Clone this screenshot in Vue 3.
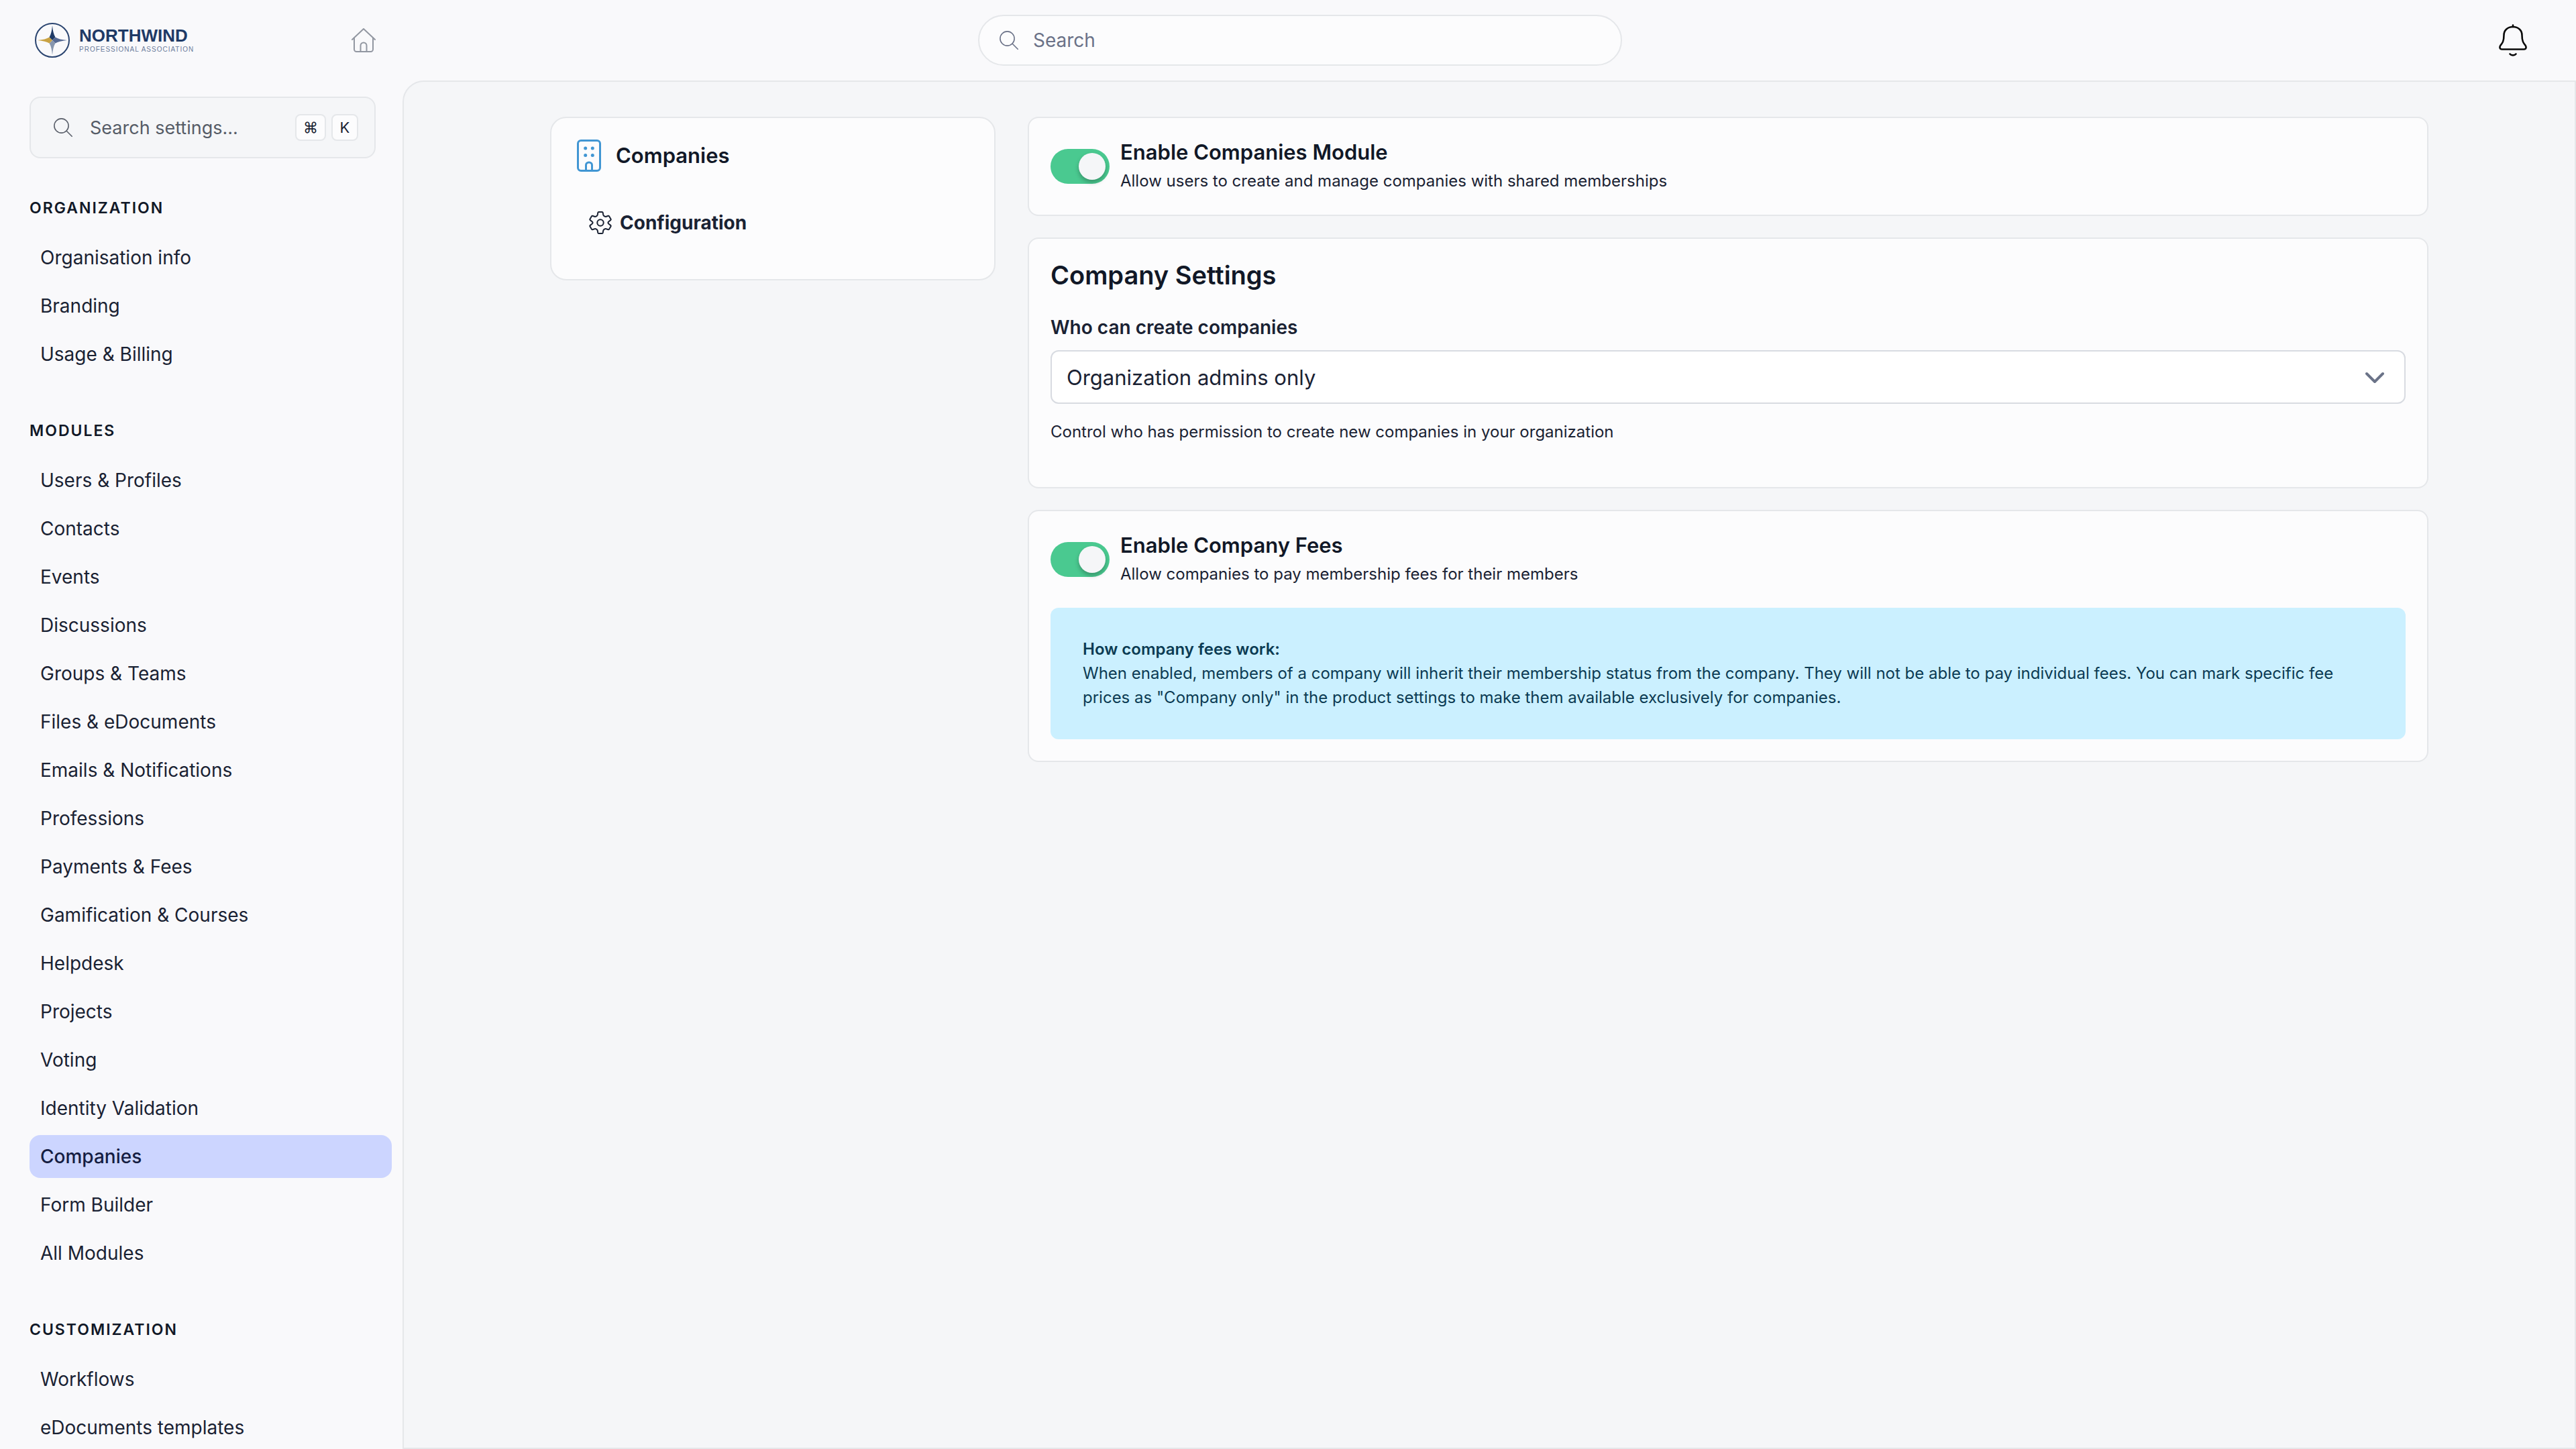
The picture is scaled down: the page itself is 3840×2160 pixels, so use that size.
<script setup>
import { ref } from 'vue'

const sections = [
  { title: 'Organization', items: ['Organisation info', 'Branding', 'Usage & Billing'] },
  {
    title: 'Modules',
    items: [
      'Users & Profiles', 'Contacts', 'Events', 'Discussions', 'Groups & Teams',
      'Files & eDocuments', 'Emails & Notifications', 'Professions', 'Payments & Fees',
      'Gamification & Courses', 'Helpdesk', 'Projects', 'Voting', 'Identity Validation',
      'Companies', 'Form Builder', 'All Modules',
    ],
  },
  { title: 'Customization', items: ['Workflows', 'eDocuments templates'] },
]
const active = ref('Companies')
const moduleEnabled = ref(true)
const feesEnabled = ref(true)
const creator = ref('admins')
</script>

<template>
  <div class="page">
    <header class="topbar">
      <div class="brand-area">
        <a class="brand" href="#" aria-label="Northwind Professional Association">
          <svg class="brand-mark" viewBox="0 0 52 52" aria-hidden="true">
            <circle cx="26" cy="26" r="25" fill="none" stroke="#2b4570" stroke-width="2" />
            <path d="M26 4Q25 16 21.500 21.500L26 26 30.500 21.500Q27 16 26 4Z" fill="#1f3a66" />
            <path d="M48 26Q36 25 30.500 21.500L26 26 30.500 30.500Q36 27 48 26Z" fill="#566a94" />
            <path d="M26 48Q27 36 30.500 30.500L26 26 21.500 30.500Q25 36 26 48Z" fill="#8796ae" />
            <path d="M4 26Q16 27 21.500 30.500L26 26 21.500 21.500Q16 25 4 26Z" fill="#c9a243" />
          </svg>
          <span class="brand-text">
            <span class="brand-name">NORTHWIND</span>
            <span class="brand-tag">PROFESSIONAL ASSOCIATION</span>
          </span>
        </a>
        <a class="home" href="#" aria-label="Home">
          <svg viewBox="0 0 36 36" fill="none" stroke="#9297a1" stroke-width="2" stroke-linecap="round" stroke-linejoin="round" aria-hidden="true">
            <path d="M1 17 18 1 35 17" />
            <path d="M4 14.500V31.500a3.500 3.500 0 0 0 3.500 3.500h21a3.500 3.500 0 0 0 3.500-3.500V14.500" />
            <path d="M13.500 35V26a4.500 4.500 0 0 1 9 0V35" />
          </svg>
        </a>
      </div>
      <label class="search">
        <svg viewBox="0 0 28 28" fill="none" stroke="#6b7288" stroke-width="1.600" stroke-linecap="round" aria-hidden="true">
          <circle cx="11.500" cy="11.500" r="10.600" />
          <path d="M19.200 19.200 27.200 27.200" />
        </svg>
        <input type="search" placeholder="Search" aria-label="Search" />
      </label>
      <div class="actions">
        <button class="bell" type="button" aria-label="Notifications">
          <svg viewBox="0 0 42 48" fill="none" stroke="#0a0a0a" stroke-width="2.600" stroke-linecap="round" stroke-linejoin="round" aria-hidden="true">
            <path d="M21 1.500V4" />
            <path d="M21 4C13 4 7.500 9 7.500 16.500 7.500 26 5 28.500 2.500 31.500 0.500 34.500 1.500 37.500 4.500 37.500H37.500C40.500 37.500 41.500 34.500 39.500 31.500 37 28.500 34.500 26 34.500 16.500 34.500 9 29 4 21 4Z" />
            <path d="M16.500 44.500C18.500 47 23.500 47 25.500 44.500" />
          </svg>
        </button>
      </div>
    </header>

    <div class="body">
      <aside class="sidebar">
        <button class="quick" type="button">
          <svg viewBox="0 0 28 28" fill="none" stroke="#5b606b" stroke-width="1.600" stroke-linecap="round" aria-hidden="true">
            <circle cx="11.500" cy="11.500" r="10.600" />
            <path d="M19.200 19.200 27.200 27.200" />
          </svg>
          <span class="quick-text">Search settings...</span>
          <kbd>⌘</kbd><kbd>K</kbd>
        </button>
        <nav class="nav" aria-label="Settings">
          <section v-for="s in sections" :key="s.title" class="nav-section">
            <h2 class="nav-title">{{ s.title }}</h2>
            <ul class="nav-list">
              <li v-for="item in s.items" :key="item">
                <a href="#" class="nav-link" :class="{ active: item === active }" @click.prevent="active = item">{{ item }}</a>
              </li>
            </ul>
          </section>
        </nav>
      </aside>

      <main class="main">
        <div class="content">
          <div class="card menu">
            <h1 class="menu-title">
              <svg viewBox="0 0 36 48" fill="none" stroke="#4196d3" stroke-width="3" stroke-linejoin="round" aria-hidden="true">
                <rect x="1.500" y="1.500" width="33" height="45" rx="4.500" />
                <path d="M13.500 46V38a4.500 4 0 0 1 9 0V46" />
                <g fill="#4196d3" stroke="none">
                  <circle cx="12.700" cy="13" r="2.500" /><circle cx="23.300" cy="13" r="2.500" />
                  <circle cx="12.700" cy="23.500" r="2.500" /><circle cx="23.300" cy="23.500" r="2.500" />
                </g>
              </svg>
              Companies
            </h1>
            <a class="menu-link" href="#">
              <svg viewBox="0 0 34 34" fill="none" stroke="#1a2233" stroke-width="2" stroke-linejoin="round" aria-hidden="true">
                <circle cx="17" cy="17" r="4.700" />
                <path d="M14.500 1H19.500Q20.500 1 20.700 2L21.200 5Q21.500 6.500 23 7.400T25.800 7.800L28.600 6.800Q29.500 6.500 30 7.300L32.500 11.500Q33 12.400 32.200 13.100L29.500 15.300Q28.400 16.300 28.400 17T29.500 18.700L32.200 20.900Q33 21.600 32.500 22.500L30 26.700Q29.500 27.500 28.600 27.200L25.800 26.200Q24.500 25.700 23 26.600T21.200 29L20.700 32Q20.500 33 19.500 33H14.500Q13.500 33 13.300 32L12.800 29Q12.500 27.500 11 26.600T8.200 26.200L5.400 27.200Q4.500 27.500 4 26.700L1.500 22.500Q1 21.600 1.800 20.900L4.500 18.700Q5.600 17.700 5.600 17T4.500 15.300L1.800 13.100Q1 12.400 1.500 11.500L4 7.300Q4.500 6.500 5.400 6.800L8.200 7.800Q9.500 8.300 11 7.400T12.800 5L13.300 2Q13.500 1 14.500 1Z" />
              </svg>
              Configuration
            </a>
          </div>

          <div class="panels">
            <section class="card panel">
              <div class="switch-row">
                <input id="module" v-model="moduleEnabled" class="switch" type="checkbox" role="switch" />
                <div class="switch-text">
                  <label class="switch-title" for="module">Enable Companies Module</label>
                  <p class="hint">Allow users to create and manage companies with shared memberships</p>
                </div>
              </div>
            </section>

            <section class="card panel">
              <h2 class="panel-title">Company Settings</h2>
              <label class="field-label" for="creator">Who can create companies</label>
              <div class="select-wrap">
                <select id="creator" v-model="creator" class="select">
                  <option value="admins">Organization admins only</option>
                  <option value="all">All members</option>
                </select>
                <svg class="chevron" viewBox="0 0 28 18" fill="none" stroke="#6b7388" stroke-width="4" stroke-linecap="round" stroke-linejoin="round" aria-hidden="true">
                  <path d="M2 3 14 15 26 3" />
                </svg>
              </div>
              <p class="hint field-hint">Control who has permission to create new companies in your organization</p>
            </section>

            <section class="card panel">
              <div class="switch-row">
                <input id="fees" v-model="feesEnabled" class="switch" type="checkbox" role="switch" />
                <div class="switch-text">
                  <label class="switch-title" for="fees">Enable Company Fees</label>
                  <p class="hint">Allow companies to pay membership fees for their members</p>
                </div>
              </div>
              <div class="notice">
                <strong>How company fees work:</strong>
                <p>When enabled, members of a company will inherit their membership status from the company. They will not be able to pay individual fees. You can mark specific fee prices as "Company only" in the product settings to make them available exclusively for companies.</p>
              </div>
            </section>
          </div>
        </div>
      </main>
    </div>
  </div>
</template>

<style>
body {
  margin: 0;
  background: #f9f9fb;
}
</style>

<style scoped>
* {
  box-sizing: border-box;
}
.page {
  min-height: 100vh;
  display: flex;
  flex-direction: column;
  background: #f9f9fb;
  color: #1a2233;
  font-family: Inter, "Liberation Sans", sans-serif;
  font-size: 28px;
}
h1, h2, p, ul {
  margin: 0;
  padding: 0;
}
svg {
  display: block;
  flex: none;
}
a {
  color: inherit;
  text-decoration: none;
}
button, input, select {
  font: inherit;
  color: inherit;
}

/* Top bar */
.topbar {
  display: grid;
  grid-template-columns: 1fr minmax(0, 960px) 1fr;
  align-items: center;
  height: 120px;
  padding-left: 36px;
}
.brand-area {
  display: flex;
  align-items: center;
  justify-content: space-between;
  width: 524px;
  padding-left: 16px;
}
.brand {
  display: flex;
  align-items: center;
  gap: 14px;
}
.brand-mark {
  width: 52px;
  height: 52px;
}
.brand-text {
  display: flex;
  flex-direction: column;
  font-family: "Liberation Sans", Arial, sans-serif;
}
.brand-name {
  font-size: 26px;
  line-height: 28px;
  font-weight: 700;
  color: #1f3a66;
}
.brand-tag {
  font-size: 10px;
  line-height: 14px;
  letter-spacing: 1px;
  color: #6b7c9b;
}
.home svg {
  width: 36px;
  height: 36px;
}
.search {
  display: flex;
  align-items: center;
  gap: 22px;
  height: 76px;
  padding: 0 30px;
  border: 2px solid #e5e7ea;
  border-radius: 38px;
  background: #fcfcfd;
}
.search svg {
  width: 28px;
  height: 28px;
}
.search input {
  flex: 1;
  min-width: 0;
  padding: 0;
  border: 0;
  outline: 0;
  background: none;
}
.search input::placeholder {
  color: #6b7288;
  opacity: 1;
}
.actions {
  display: flex;
  justify-content: flex-end;
  padding-right: 73px;
}
.bell {
  padding: 0;
  border: 0;
  background: none;
}
.bell svg {
  width: 42px;
  height: 48px;
}

/* Sidebar */
.body {
  flex: 1;
  display: flex;
}
.sidebar {
  flex: none;
  width: 600px;
  padding: 24px 16px 0 44px;
}
.quick {
  display: flex;
  align-items: center;
  gap: 8px;
  width: 516px;
  height: 92px;
  padding: 0 24px 0 34px;
  border: 2px solid #e5e7ea;
  border-radius: 16px;
  background: #f5f6f8;
  font-size: 27px;
}
.quick svg {
  width: 28px;
  height: 28px;
}
.quick-text {
  flex: 1;
  padding-left: 18px;
  text-align: left;
  color: #565c67;
}
kbd {
  min-width: 40px;
  height: 40px;
  padding: 0 10px;
  border: 2px solid #e5e7ea;
  border-radius: 8px;
  background: #fcfcfd;
  color: #1a2233;
  font-family: Inter, "DejaVu Sans", sans-serif;
  font-size: 22px;
  line-height: 36px;
  text-align: center;
}
.nav {
  display: flex;
  flex-direction: column;
  gap: 64px;
  padding-top: 56px;
}
.nav-title {
  margin-bottom: 24px;
  font-size: 23px;
  line-height: 36px;
  font-weight: 600;
  letter-spacing: 2px;
  text-transform: uppercase;
  color: #111827;
}
.nav-list {
  display: flex;
  flex-direction: column;
  gap: 8px;
  list-style: none;
}
.nav-link {
  display: block;
  height: 64px;
  padding: 0 16px;
  border-radius: 16px;
  line-height: 64px;
}
.nav-link.active {
  background: #ccd5ff;
  color: #151d42;
  font-weight: 500;
}

/* Content */
.main {
  flex: 1;
  min-width: 0;
  padding: 52px 48px;
  border: 2px solid #e5e7ea;
  border-top-left-radius: 32px;
  background: #f5f6f8;
}
.content {
  display: grid;
  grid-template-columns: repeat(12, minmax(0, 1fr));
  column-gap: 48px;
  align-items: start;
  max-width: 2800px;
  margin: 0 auto;
}
.card {
  border: 2px solid #e5e7ea;
  border-radius: 16px;
  background: #fcfcfd;
}
.menu {
  grid-column: span 3;
  padding: 32px 38px 64px;
  border-radius: 24px;
}
.menu-title {
  display: flex;
  align-items: center;
  gap: 22px;
  font-size: 31px;
  line-height: 48px;
  font-weight: 600;
  color: #111827;
}
.menu-title svg {
  width: 36px;
  height: 48px;
}
.menu-link {
  display: flex;
  align-items: center;
  gap: 12px;
  margin-top: 56px;
  padding-left: 18px;
  line-height: 40px;
  font-weight: 700;
}
.menu-link svg {
  width: 34px;
  height: 34px;
}
.panels {
  grid-column: span 9;
  display: flex;
  flex-direction: column;
  gap: 32px;
}
.panel {
  padding: 32px;
}
.switch-row {
  display: flex;
  align-items: center;
  gap: 16px;
}
.switch {
  appearance: none;
  flex: none;
  display: flex;
  align-items: center;
  width: 88px;
  height: 52px;
  margin: 0;
  padding: 0 6px;
  border-radius: 26px;
  background: #c5c9d0;
}
.switch::before {
  content: "";
  width: 40px;
  height: 40px;
  border-radius: 50%;
  background: #f5f6f8;
  box-shadow: 0 4px 6px rgba(0, 0, 0, 0.25);
}
.switch:checked {
  justify-content: flex-end;
  background: #4ac990;
}
.switch-text {
  display: flex;
  flex-direction: column;
  gap: 6px;
}
.switch-title {
  font-size: 31px;
  line-height: 38px;
  font-weight: 600;
  color: #111827;
}
.hint {
  font-size: 24px;
  line-height: 36px;
}
.panel-title {
  margin-bottom: 36px;
  font-size: 38px;
  line-height: 44px;
  font-weight: 600;
  color: #111827;
}
.field-label {
  display: block;
  margin-bottom: 14px;
  line-height: 40px;
  font-weight: 600;
}
.select-wrap {
  position: relative;
}
.select {
  appearance: none;
  display: block;
  width: 100%;
  height: 80px;
  padding: 0 80px 0 22px;
  border: 2px solid #d8dbe1;
  border-radius: 12px;
  background: #ffffff;
  font-size: 31px;
}
.chevron {
  position: absolute;
  top: 32px;
  right: 32px;
  width: 28px;
  height: 18px;
  pointer-events: none;
}
.field-hint {
  margin: 24px 0 32px;
}
.notice {
  margin-top: 32px;
  padding: 44px 48px;
  border-radius: 12px;
  background: #cbf0ff;
  color: #0b3b53;
  font-size: 24px;
  line-height: 36px;
}
.notice strong {
  font-weight: 600;
}
</style>
